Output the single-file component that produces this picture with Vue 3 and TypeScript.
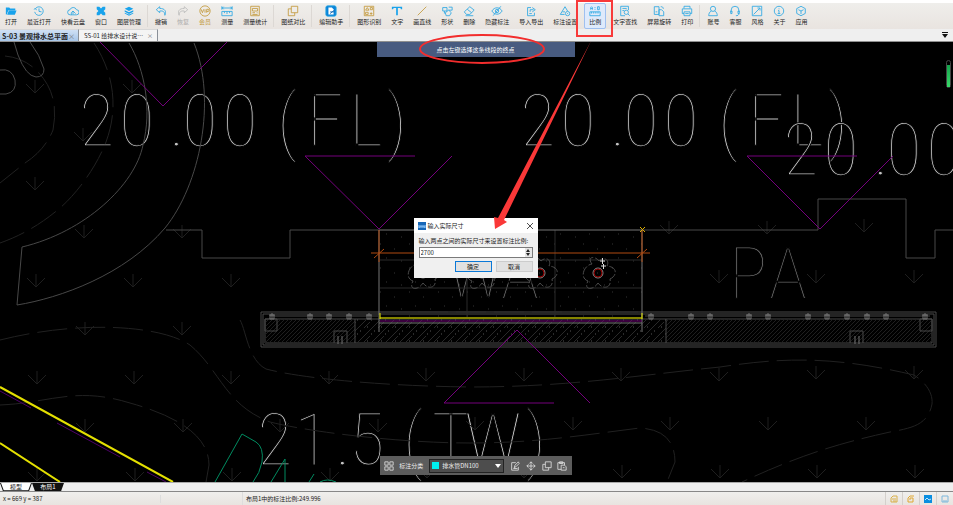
<script setup lang="ts">
import { ref } from 'vue'

interface Tool {
  label: string
  icon: string
  tone?: 'gold' | 'grey' | 'solid'
  sep?: boolean
  active?: boolean
}

const tools: Tool[] = [
  { label: '打开', icon: 'M1 3h4l1 1h6v2H4l-2 5H1z M4.500 6.500h9l-2 5H2.500z', tone: 'solid' },
  { label: '最近打开', icon: 'M3 4a5 5 0 1 1-1 4M1 5l2-1 1 2M7 4v3.500l3 .5' },
  { label: '快看云盘', icon: 'M4 11.500a3 3 0 0 1-.5-6 4 4 0 0 1 7.500 0 3 3 0 0 1 0 6zM5 11.500V9l2-2 3 3M7 7v4' },
  { label: '窗口', icon: 'M2 2h3l2 2 2-2h3v3l-2 2 2 2v3H9l-2-2-2 2H2V9l2-2-2-2z', tone: 'solid' },
  { label: '图层管理', icon: 'M7 2l5 2.500L7 7 2 4.500zM2 6l5 2.500L12 6v2l-5 2.500L2 8zM2 9l5 2 5-2v1l-5 2.500L2 10z', tone: 'solid' },
  { label: '撤销', icon: 'M5.500 2L1.500 5.500l4 3.500V7c4-.5 6 1 6 5 2-5 0-8-6-8z', sep: true },
  { label: '恢复', icon: 'M8.500 2l4 3.500-4 3.500V7c-4-.5-6 1-6 5-2-5 0-8 6-8z', tone: 'grey' },
  { label: '会员', icon: 'M7 1a6 6 0 1 1 0 12A6 6 0 1 1 7 1M2.500 5l1.500 4 1.500-4M7 5v4M9 9V5h1.500a1 1 0 0 1 0 2.500H9', tone: 'gold' },
  { label: '测量', icon: 'M1 3.500h12M1 1.500v4M13 1.500v4M3 2L1.500 3.500 3 5M11 2l1.500 1.500L11 5M1 7.500h12v5H1zM4 7.500v2M7 7.500v3M10 7.500v2' },
  { label: '测量统计', icon: 'M2 1.500h10v11H2zM4 4h6v3H4zM4 9h3M9 9h1M4 11h6', tone: 'gold' },
  { label: '图纸对比', icon: 'M5 1.500h7.500V9H5zM5 4.500H1.500v8H9V9', tone: 'gold', sep: true },
  { label: '编辑助手', icon: 'badge', sep: true },
  { label: '图形识别', icon: 'M1.500 1.500h11v11h-11zM3 6l2-3 2 3zM8.500 3h2.500v2.500H8.500zM3 8.500h3V11H3zM9.500 8.500v3M8 10h3', tone: 'gold', sep: true },
  { label: '文字', icon: 'M1 2h12v3h-1.500l-.5-1.500H8V12H6V3.500H3L2.500 5H1z', tone: 'solid' },
  { label: '画直线', icon: 'M2 12L12 2', tone: 'gold' },
  { label: '形状', icon: 'M2 3h5v4H2zM4 7v3M9 2.500h4v3.500H9M5 9l4-3 3 3-2 3.500H6z' },
  { label: '删除', icon: 'M8 2l5 4-5 5H4L1.500 8zM5 5l5 4M3 12.500h9' },
  { label: '隐藏标注', icon: 'M1 7c3-5 9-5 12 0-3 5-9 5-12 0M7 5a2 2 0 1 1 0 4 2 2 0 1 1 0-4M11.500 1.500l-9 11' },
  { label: '导入导出', icon: 'M7 3H3v9.500h8V9M6 8V5.500h4M8.500 3L12 5.500 8.500 8M5 10h3' },
  { label: '标注设置', icon: 'M1.500 11L7 2l3 5M1.500 11h5M4 8h3M10 7.500a2.500 2.500 0 1 1 0 5 2.500 2.500 0 1 1 0-5M10 9.500v1' },
  { label: '比例', icon: 'M2 5.500V3l1-1 1 1v2.500M2 4h2M7 2.500v1M7 4.500v1M10 2h2v3.500h-2zM1 8h12v4.500H1zM3 8v2M5.500 8v2M8 8v2M10.500 8v2', active: true },
  { label: '文字查找', icon: 'M11 6V1.500H2v11h5M4 4h5M4 6.500h2M8.500 6a2.500 2.500 0 1 1 0 5 2.500 2.500 0 1 1 0-5M10.500 10.500l2 2' },
  { label: '屏幕旋转', icon: 'M1.500 2h5.500v9H1.500zM7 5.500h3l2.500 2.500v4.500H7zM9 2c2 0 3 .5 3 2.500M3 8h2' },
  { label: '打印', icon: 'M3.500 4V1.500h7V4M3.500 10H1.500V4.500h11V10h-2M3.500 8h7v4.500h-7zM5 10h4' },
  { label: '账号', icon: 'M7 1.500a2.500 2.500 0 1 1 0 6 2.500 2.500 0 1 1 0-6M5 7c-2 1-3 3-3 5.500h10C12 10 11 8 9 7', sep: true },
  { label: '客服', icon: 'M2.500 8V6a4.500 4.500 0 0 1 9 0v2M2 7v3h1.500V7zM10.500 7v3H12V7zM11.500 10c0 2-1.500 2.500-3.500 2.500' },
  { label: '风格', icon: 'M1.500 1.500h11v11h-11zM3 11l7-7M7.500 3.500H10.500V6.500' },
  { label: '关于', icon: 'M7 1.500a5.500 5.500 0 1 1 0 11 5.500 5.500 0 1 1 0-11M7 4v1M6 6.500h1V10M5.500 10h3' },
  { label: '应用', icon: 'M7 1.500l5 2.700v5.600l-5 2.700-5-2.700V4.200zM4 5.500l3 1.500 3-1.500M7 7v3.500' },
]

const realSize = ref('2700')
const category = ref('排水管DN100')
const step = (d: number) => { realSize.value = String(Number(realSize.value) + d) }

const grassRows: { y: number; xs: number[] }[] = [
  { y: 93, xs: [35, 132] },
  { y: 141, xs: [83] },
  { y: 190, xs: [35] },
  { y: 238, xs: [84, 182] },
  { y: 234, xs: [669, 767] },
  { y: 232, xs: [864] },
  { y: 287, xs: [36, 133, 231] },
  { y: 283, xs: [719, 816, 914] },
  { y: 335, xs: [85, 182] },
  { y: 384, xs: [37, 134, 231, 329] },
  { y: 381, xs: [426, 524, 621, 719] },
  { y: 379, xs: [816, 914] },
  { y: 432, xs: [85, 183, 280, 378] },
  { y: 430, xs: [475, 573, 670, 768, 866] },
  { y: 481, xs: [37, 135, 232, 330] },
  { y: 478, xs: [427, 524, 622, 720, 817, 915] },
]
const posts = [272, 310, 329, 349, 369, 651, 691, 710, 749, 768, 808, 827, 847, 867, 886, 925]
const flowers = [423, 482, 540, 598]
const levelXs = [97, 137, 177, 200, 240, 287, 325, 366, 397]
const at = (dx: number) => levelXs.map((x) => x + dx).join(' ')
</script>

<template>
  <div class="app">
    <header>
      <nav class="toolbar" aria-label="工具栏">
        <template v-for="t in tools" :key="t.label">
          <span v-if="t.sep" class="sep"></span>
          <button type="button" class="tool" :class="[t.tone, { active: t.active, member: t.label === '会员' }]">
            <svg v-if="t.icon === 'badge'" viewBox="0 0 14 14">
              <rect x="1" y="1" width="12" height="12" rx="2" fill="#0a84d8" />
              <path d="M4 3h4l2 2v6H4z" fill="#fff" stroke="none" />
              <path d="M6 8h5M6 10l5-4" stroke="#0a62b0" />
            </svg>
            <svg v-else viewBox="0 0 14 14"><path :d="t.icon" /></svg>
            <span>{{ t.label }}</span>
          </button>
        </template>
      </nav>
      <div class="tabs">
        <div class="tab current"><span class="name">S-03 景观排水总平面</span><button type="button" aria-label="关闭">×</button></div>
        <div class="tab"><span class="name">SS-01 给排水设计说…</span><button type="button" aria-label="关闭">×</button></div>
        <button type="button" class="more" aria-label="更多"><svg viewBox="0 0 8 6"><path d="M1 0h6v1H1zM1 2h6L4 6z" /></svg></button>
      </div>
    </header>

    <main class="canvas">
      <svg class="drawing" viewBox="0 42 953 440" preserveAspectRatio="xMinYMin slice">
        <defs>
          <pattern id="fine" width="4" height="4" patternUnits="userSpaceOnUse"><path d="M-1 1L1-1M0 4L4 0M3 5L5 3" stroke="#1f1f1f" /></pattern>
          <pattern id="wide" width="14" height="14" patternUnits="userSpaceOnUse"><path d="M0 14L14 0M-3 9L9-3" stroke="#292929" /><path d="M3 5h1M10 9h1M7 12h1" stroke="#555" /></pattern>
          <pattern id="dots" width="29" height="24" patternUnits="userSpaceOnUse"><path d="M3 4h1M17 9h1M9 18h1M24 21h1" stroke="#333" /></pattern>
        </defs>

        <g class="cad">
          <text :x="at(0)" y="146">20.00(FL)</text>
          <text :x="at(441)" y="146">20.00(FL)</text>
          <text :x="at(704)" y="175">20.00</text>
          <text x="275 312 343 367 413 451 493 536" y="465">21.5(TW)</text>
        </g>
        <g class="cad dim">
          <text x="475 520" y="299">WA</text>
          <text x="748 788" y="299">PA</text>
        </g>

        <g class="grass">
          <template v-for="row in grassRows" :key="row.y">
            <path v-for="x in row.xs" :key="x" :d="`M${x} ${row.y - 13}v13M${x - 9} ${row.y - 9}l9 9 9-9`" />
          </template>
        </g>

        <g class="contour dashed">
          <path d="M94 43C115 75 118 110 106 142C95 170 75 195 60 208C40 225 20 236 0 243" />
          <path d="M5 56Q25 58 38 72Q60 95 53 130Q45 150 25 163L0 183" />
          <path d="M240 320C246 330 248 360 266 369C300 378 380 386 470 387C570 387 640 375 720 367C780 358 830 355 914 375C928 384 933 395 932 404C928 425 912 428 890 432C840 443 800 455 742 482" />
          <path d="M0 405C50 403 75 386 130 403Q209 425 209 465L206 482" />
          <path d="M0 340C80 320 160 325 190 345C220 370 225 405 270 422C310 432 400 443 470 443C540 443 590 434 640 428Q675 430 675 462L667 482" />
        </g>
        <g class="contour bright">
          <path d="M14 42L18 55Q26 76 36 77Q44 77 44 69Q40 55 30 42M0 70Q12 68 15 80Q17 92 6 94L0 94" />
          <path d="M129 43C145 70 152 110 143 145C135 185 85 232 22 247L17 305C60 298 125 275 165 228C200 185 217 100 194 43" />
        </g>

        <g class="wall">
          <path d="M166 230H202V258H290V230H379M643 230H818V199H906V258H935V230H953" />
          <path d="M261 312H936V347H261zM263 314H934V345H263zM265 319H932V343H265z" />
        </g>
        <rect x="265" y="319" width="90" height="24" fill="url(#fine)" />
        <rect x="355" y="319" width="311" height="24" fill="url(#wide)" />
        <rect x="666" y="319" width="266" height="24" fill="url(#fine)" />
        <path class="wall" d="M355 319v24M666 319v24M265 319h12v12h-12zM920 319h12v12h-12zM334 343v-12h13v12M850 343v-12h13v12M270 316H378M645 316H930" />
        <path class="lit" d="M338 336v8M342 336v8M855 336v8M859 336v8" />
        <path v-for="x in posts" :key="x" class="lit" :d="`M${x - 2} 319v-4h4v4zM${x} 313v6M${x - 3} 315h6`" />

        <rect x="380" y="230" width="262" height="88" fill="url(#dots)" />
        <path class="faint" d="M380 260H642M380 288H642M467 230V318M555 230V318" />
        <path class="faint dashed" d="M380 312H642" />
        <g v-for="x in flowers" :key="x" class="flower">
          <path :d="`M${x - 6} 264C${x - 12} 256 ${x - 2} 256 ${x + 1} 261C${x + 6} 256 ${x + 12} 260 ${x + 9} 266C${x + 20} 267 ${x + 19} 276 ${x + 12} 279C${x + 14} 288 ${x + 5} 290 ${x} 283C${x - 5} 291 ${x - 15} 290 ${x - 10} 281C${x - 19} 278 ${x - 14} 265 ${x - 6} 264`" />
          <circle :cx="x" cy="273" r="5" />
          <circle class="core" :cx="x" cy="273" r="4" />
        </g>
        <path class="plus" d="M600 261h5M602.500 258v6M601 266h5M603.500 264v5" />

        <path class="edge" d="M379 230H643M379 230V332M642 230V332M379 323H642" />
        <path class="orange" d="M371 253H650M379 230V262M642 230V262M374 258L384 249M637 258L647 249" />
        <path class="gold-mark" d="M640 227l5 5M645 227l-5 5" />
        <path d="M380 318H642" stroke="#858500" stroke-width="2" />
        <path d="M380 313V319M642 313V319" stroke="#e8e800" stroke-width="1" />
        <path class="purple" d="M380 321H642" />
        <path class="purple" d="M100 42L163 106L227 42M415 156H305L379 229L452 156M857 156H747L820 229L893 156M554 403H444L517 330L590 403" />
        <path class="violet" d="M0 391L31 408M57 423L120 457M147 472L166 482" />
        <path class="yellow" d="M0 387L173 482M0 443L60 482" />
        <path class="green" d="M215 482L242 434L256 442Q264 447 262 462Q260 473 253 482M271 482L285 459V482M309 482L314 474M320 482q7-4 16 0" />
      </svg>

      <div class="hint">点击左键选择这条线段的终点</div>
      <div class="gauge"><span></span></div>

      <form class="dialog" @submit.prevent>
        <div class="title">
          <svg viewBox="0 0 8 8"><rect width="8" height="8" fill="#1768b8" /><path d="M1 3v3M3 3v2M5 3v2M7 3v3M1 5h6" stroke="#9cd0ff" /></svg>
          <span>输入实际尺寸</span>
          <button type="button" aria-label="关闭"><svg viewBox="0 0 6 6"><path d="M0 0l6 6M6 0l-6 6" stroke="#222" stroke-width=".8" /></svg></button>
        </div>
        <div class="body">
          <label for="size">输入两点之间的实际尺寸来设置标注比例:</label>
          <div class="spin">
            <input id="size" v-model="realSize" type="text">
            <div class="arrows">
              <button type="button" aria-label="增加" @click="step(1)"><svg viewBox="0 0 4 3"><path d="M2 0l2 3H0z" /></svg></button>
              <button type="button" aria-label="减少" @click="step(-1)"><svg viewBox="0 0 4 3"><path d="M0 0h4L2 3z" /></svg></button>
            </div>
          </div>
          <div class="actions">
            <button type="submit" class="primary">确定</button>
            <button type="button">取消</button>
          </div>
        </div>
      </form>

      <div class="float">
        <button type="button" aria-label="分组"><svg viewBox="0 0 12 12"><path d="M1 1h4v4H1zM7 1h4v4H7zM1 7h4v4H1zM7 7h4v4H7z" /></svg></button>
        <label for="cat">标注分类</label>
        <div class="pick">
          <span class="swatch"></span>
          <select id="cat" v-model="category"><option>排水管DN100</option></select>
          <svg viewBox="0 0 6 4"><path d="M0 0h6L3 4z" /></svg>
        </div>
        <button type="button" aria-label="编辑"><svg viewBox="0 0 12 12"><path d="M7 2H2v9h8V7M5 8l1-3 4-4 1 2-4 4zM4 9h5" /></svg></button>
        <button type="button" aria-label="移动"><svg viewBox="0 0 12 12"><path d="M6 1v10M1 6h10M4 3l2-2 2 2M4 9l2 2 2-2M3 4L1 6l2 2M9 4l2 2-2 2" /></svg></button>
        <button type="button" aria-label="复制"><svg viewBox="0 0 12 12"><path d="M4 1h7v7H4zM4 4H1v7h7V8" /></svg></button>
        <button type="button" aria-label="粘贴"><svg viewBox="0 0 12 12"><path d="M5 10H1V2h8v3M3 1h4v2H3zM5 5h4l2 2v4H5zM7 8h2" /></svg></button>
      </div>
    </main>

    <footer>
      <div class="sheets">
        <button type="button" class="sheet light"><span>模型</span></button>
        <button type="button" class="sheet dark"><span>布局1</span></button>
      </div>
      <div class="status">
        <span class="coords">x = 669 y = 387</span>
        <span class="blank"></span>
        <span class="scale">布局1中的标注比例:249.996</span>
        <button type="button" aria-label="图纸"><svg viewBox="0 0 8 8"><path d="M1 3l2-2h4v6H1zM2 4h4M3 6h3" stroke="#d9b04a" /></svg></button>
        <button type="button" aria-label="布局"><svg viewBox="0 0 8 8"><path d="M7 1H3L1 3v4h5V3H3v2" stroke="#e0a832" /></svg></button>
        <button type="button" aria-label="模型"><svg viewBox="0 0 8 8"><rect width="8" height="8" fill="#0a8ee0" /><path d="M1 5l2-2 2 2 2-1" stroke="#bfe6ff" /></svg></button>
        <button type="button" aria-label="屏幕"><svg viewBox="0 0 8 8"><path d="M1 1h6v6H1zM2 6h4" stroke="#7cb8dc" /></svg></button>
      </div>
    </footer>

    <svg class="markup" viewBox="0 0 953 505" preserveAspectRatio="xMinYMin meet" aria-hidden="true">
      <rect x="577" y="1" width="35" height="35" fill="none" stroke="#f83a3a" stroke-width="2" />
      <ellipse cx="482" cy="49" rx="62" ry="14" fill="none" stroke="#f22d2d" stroke-width="2" />
      <path d="M591 41L504 220L507 222L495 229L494 217L498 218Z" fill="#fa3838" />
    </svg>
  </div>
</template>

<style>
body { margin: 0; background: #efefef; }
</style>

<style scoped>
.app {
  position: relative;
  display: flex;
  flex-direction: column;
  height: 100vh;
  overflow: hidden;
  font: 6px/8px "Noto Sans CJK SC", sans-serif;
  color: #222;
}
button, input, select { font: inherit; color: inherit; margin: 0; padding: 0; border: 0; background: none; box-sizing: border-box; }
svg { fill: none; }
.toolbar {
  display: flex;
  height: 26px;
  border-top: 3px solid #fff;
  background: linear-gradient(#efeeeb, #e9e4e0);
}
.sep { width: 1px; margin: 2px 2px 2px 1px; background: #dcd8d4; }
.tool {
  display: flex;
  flex-direction: column;
  align-items: center;
  gap: 1px;
  padding: 2px 5px 0;
  white-space: nowrap;
}
.tool svg { width: 12px; height: 12px; stroke: #2ea9e4; stroke-width: 1; }
.tool.gold svg { stroke: #c39a3e; }
.tool.member span { color: #c39a3e; }
.tool.grey svg { stroke: #bbb; }
.tool.grey span { color: #aaa; }
.tool.solid svg { fill: #19a3ec; stroke: none; }
.tool.active { margin: 0 2px; padding: 1px 4px 0; border: 1px solid #9fc0f0; border-radius: 2px; background: #dfeafb; }
.tabs { display: flex; height: 12px; background: #efefef; border-bottom: 1px solid #8f8f8f; }
.tab {
  display: flex;
  align-items: center;
  width: 77px;
  box-sizing: border-box;
  padding: 0 4px 0 5px;
  border-right: 1px solid #8a9098;
  border-top: 1px solid #d8d8d8;
  background: #f4f4f4;
}
.tab:nth-child(2) { width: 79px; }
.tab .name { flex: 1; overflow: hidden; white-space: nowrap; }
.tab.current { width: 79px; padding: 0 4px 0 2px; background: linear-gradient(#cfe0f4, #a8c6e8); font-weight: 700; font-size: 7px; }
.tab button { width: 6px; color: #777; font-weight: 400; }
.more { margin: 0 4px 0 auto; }
.more svg { width: 8px; height: 6px; fill: #111; display: block; }
.canvas { position: relative; flex: 1; min-height: 0; background: #000; overflow: hidden; }
.drawing { display: block; width: 100%; height: 100%; }
.grass { stroke: #1f1f1f; }
.contour { stroke: #212121; }
.contour.bright { stroke: #484848; }
.dashed { stroke-dasharray: 30 8; }
.wall { stroke: #484848; }
.lit { stroke: #707070; }
.faint { stroke: #2b2b2b; }
.edge { stroke: #777; }
.orange { stroke: #b04a10; }
.gold-mark { stroke: #e0b000; }
.purple { stroke: #74007c; }
.violet { stroke: #4d0068; }
.yellow { stroke: #e4e000; stroke-width: 2; }
.green { stroke: #008b60; }
.flower { stroke: #4c4c4c; }
.flower path { stroke-dasharray: 9 2; }
.flower circle { stroke: #888; }
.flower .core { stroke: #900; }
.plus { stroke: #ddd; }
.cad { font: 100 73px "Roboto Condensed", Roboto, sans-serif; fill: #c4c4c4; stroke: #000; stroke-width: 1; text-anchor: middle; }
.cad.dim { fill: #6a6a6a; }
.hint {
  position: absolute;
  top: 0;
  left: 50%;
  width: 198px;
  margin-left: -100px;
  line-height: 15px;
  background: #485b80;
  color: #fff;
  text-align: center;
}
.gauge { position: absolute; top: 18px; right: 2px; width: 5px; height: 28px; border: 1px solid #444; border-radius: 3px; padding-top: 4px; box-sizing: border-box; }
.gauge span { display: block; height: 100%; background: linear-gradient(#14a44c, #38d868); }
.dialog { position: absolute; top: 176px; left: 50%; width: 124px; margin-left: -63px; background: #f0f0f0; }
.title { display: flex; align-items: center; height: 15px; padding: 0 5px 0 4px; background: #fff; }
.title > svg { width: 8px; height: 8px; }
.title span { flex: 1; margin-left: 2px; }
.title button svg { display: block; width: 6px; height: 6px; }
.body { padding: 4px 5px 6px; }
.body label { display: block; white-space: nowrap; }
.spin { display: flex; height: 11px; margin-top: 2px; border: 1px solid #7a7a7a; background: #fff; box-sizing: border-box; }
.spin input { flex: 1; min-width: 0; padding-left: 1px; outline: 0; }
.arrows { display: flex; flex-direction: column; width: 7px; background: #e5e5e5; }
.arrows button { flex: 1; min-height: 0; display: grid; place-items: center; }
.arrows svg { width: 4px; height: 3px; fill: #222; }
.actions { display: flex; justify-content: flex-end; gap: 4px; margin-top: 3px; }
.actions button { width: 37px; height: 11px; background: #e1e1e1; border: 1px solid #ccc; line-height: 8px; }
.actions button.primary { border-color: #0a78d7; }
.float {
  position: absolute;
  left: 50%;
  bottom: 7px;
  width: 192px;
  height: 19px;
  margin-left: -97px;
  padding: 0 4px;
  box-sizing: border-box;
  display: flex;
  align-items: center;
  justify-content: space-between;
  background: #5c5c5c;
  color: #eee;
}
.float button svg { display: block; width: 10px; height: 10px; stroke: #e0e0e0; }
.pick { display: flex; align-items: center; width: 75px; height: 14px; padding: 0 2px; border: 1px solid #222; background: #4d4d4d; box-sizing: border-box; }
.pick select { flex: 1; min-width: 0; appearance: none; margin-left: 3px; outline: 0; }
.pick svg { width: 6px; height: 4px; fill: #fff; }
.swatch { width: 7px; height: 7px; background: #00f0f0; }
.sheets { display: flex; height: 10px; background: #efefef; border-bottom: 1px solid #888; border-top: 1px solid #aaa; box-sizing: border-box; }
.sheet { width: 32px; background: #111; clip-path: polygon(0 0, 100% 0, 91% 100%, 9% 100%); line-height: 8px; }
.sheet span { display: block; }
.light span { margin: 0 1px; background: #fff; clip-path: polygon(0 0, 100% 0, 91% 90%, 9% 90%); }
.dark { color: #fff; }
.status { display: flex; align-items: center; height: 13px; background: linear-gradient(#f0efed, #e8e4e0); }
.coords { width: 157px; padding-left: 3px; border-right: 1px solid #ddd; }
.blank { width: 81px; border-right: 1px solid #ddd; height: 100%; }
.scale { flex: 1; padding-left: 3px; }
.status button { width: 17px; height: 100%; border-left: 1px solid #d4d0cc; display: grid; place-items: center; }
.status svg { width: 8px; height: 8px; }
.markup { position: absolute; top: 0; left: 0; width: 100%; height: 100%; pointer-events: none; }
</style>
